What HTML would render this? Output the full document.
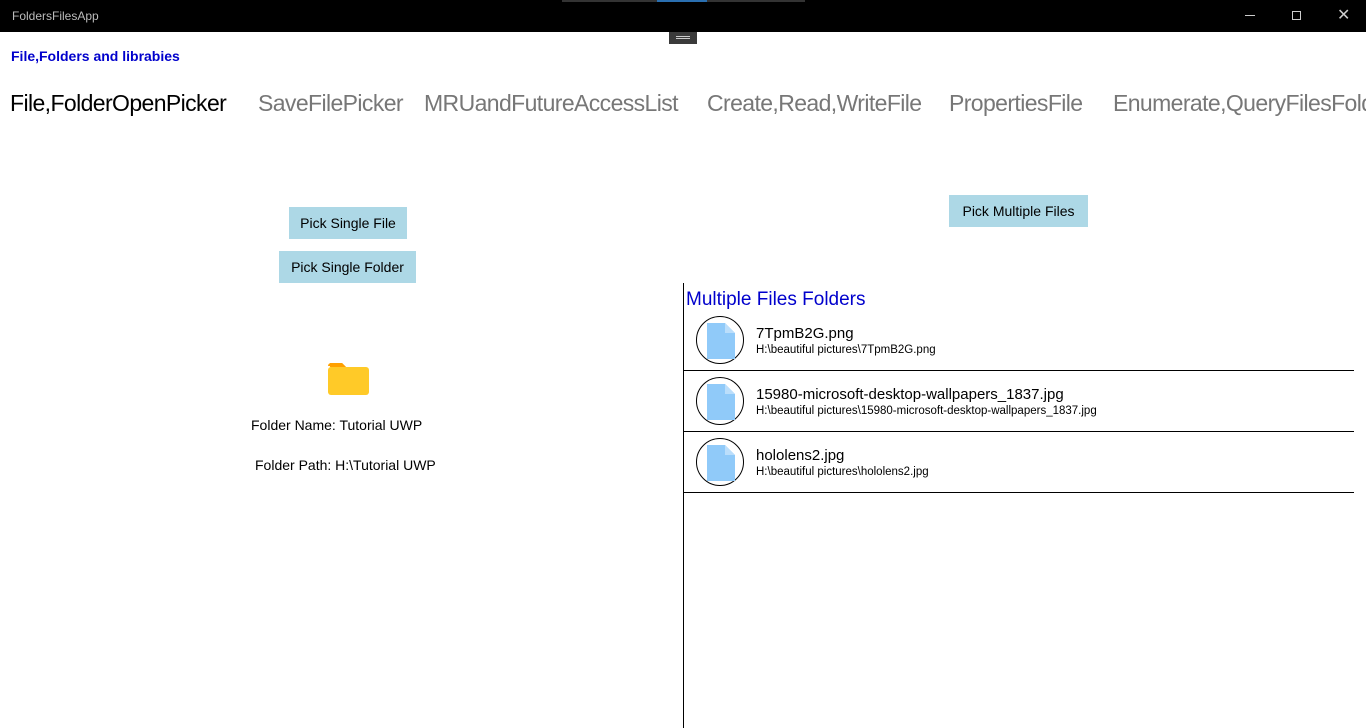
<!DOCTYPE html>
<html><head><meta charset="utf-8"><style>
*{margin:0;padding:0;box-sizing:border-box}
body{width:1366px;height:728px;position:relative;background:#fff;font-family:"Liberation Sans",sans-serif;overflow:hidden;color:#000}
.a{position:absolute;white-space:nowrap}
.tb{position:absolute;left:0;top:0;width:1366px;height:32px;background:#000}
.tab{position:absolute;top:90px;font-size:23px;color:#777;letter-spacing:-0.6px}
.btn{position:absolute;background:#ADD8E6;font-size:14px;display:flex;align-items:center;justify-content:center}
.row{position:absolute;left:684px;width:670px;height:61px;border-bottom:1px solid #000}
.circ{position:absolute;left:12px;top:6px;width:48px;height:48px;border:1px solid #000;border-radius:50%}
</style></head><body>
<div class="tb"></div>
<div class="a" style="left:562px;top:0;width:243px;height:2px;background:#333"></div>
<div class="a" style="left:657px;top:0;width:50px;height:2px;background:#2a6fb0"></div>
<div class="a" style="left:12px;top:9px;font-size:12px;color:#bbb">FoldersFilesApp</div>
<div class="a" style="left:1245px;top:15px;width:10px;height:1px;background:#ccc"></div>
<div class="a" style="left:1292px;top:11px;width:9px;height:9px;border:1px solid #ccc"></div>
<div class="a" style="left:1337px;top:9px;font-size:16px;color:#ccc;line-height:14px">✕</div>
<div class="a" style="left:669px;top:32px;width:28px;height:12px;background:#3a3a3a"><div style="margin:4px 7px 0;height:3px;border-top:1px solid #ccc;border-bottom:1px solid #ccc"></div></div>
<div class="a" style="left:11px;top:48px;font-size:14px;font-weight:bold;color:#0000cc">File,Folders and librabies</div>
<div class="tab" style="left:10px;color:#000">File,FolderOpenPicker</div>
<div class="tab" style="left:258px">SaveFilePicker</div>
<div class="tab" style="left:424px">MRUandFutureAccessList</div>
<div class="tab" style="left:707px">Create,Read,WriteFile</div>
<div class="tab" style="left:949px">PropertiesFile</div>
<div class="tab" style="left:1113px">Enumerate,QueryFilesFolders</div>
<div class="btn" style="left:289px;top:207px;width:118px;height:32px">Pick Single File</div>
<div class="btn" style="left:279px;top:251px;width:137px;height:32px">Pick Single Folder</div>
<div class="btn" style="left:949px;top:195px;width:139px;height:32px">Pick Multiple Files</div>
<svg class="a" style="left:327px;top:362px" width="43" height="34" viewBox="0 0 43 34"><path d="M3 1h12l4 4H3z" fill="#FFA000"/><rect x="1" y="5" width="41" height="28" rx="3" fill="#FFCA28"/><path d="M1 4a3 3 0 0 1 3-3h11l4 4" fill="#FFA000"/></svg>
<div class="a" style="left:251px;top:417px;font-size:14px">Folder Name: Tutorial UWP</div>
<div class="a" style="left:255px;top:457px;font-size:14px">Folder Path: H:\Tutorial UWP</div>
<div class="a" style="left:683px;top:283px;width:1px;height:445px;background:#000"></div>
<div class="a" style="left:686px;top:289px;font-size:19px;color:#0000cc">Multiple Files Folders</div>
<div class="row" style="top:310px">
<div class="circ"><svg style="position:absolute;left:10px;top:6px" width="28" height="36" viewBox="0 0 28 36"><path d="M0 0h18l10 10v26H0z" fill="#90CAF9"/><path d="M18 0v10h10z" fill="#BBDEFB"/></svg></div>
<div class="a" style="left:72px;top:15px;font-size:15px">7TpmB2G.png</div>
<div class="a" style="left:72px;top:34px;font-size:11.5px">H:\beautiful pictures\7TpmB2G.png</div></div>
<div class="row" style="top:371px">
<div class="circ"><svg style="position:absolute;left:10px;top:6px" width="28" height="36" viewBox="0 0 28 36"><path d="M0 0h18l10 10v26H0z" fill="#90CAF9"/><path d="M18 0v10h10z" fill="#BBDEFB"/></svg></div>
<div class="a" style="left:72px;top:15px;font-size:15px">15980-microsoft-desktop-wallpapers_1837.jpg</div>
<div class="a" style="left:72px;top:34px;font-size:11.5px">H:\beautiful pictures\15980-microsoft-desktop-wallpapers_1837.jpg</div></div>
<div class="row" style="top:432px">
<div class="circ"><svg style="position:absolute;left:10px;top:6px" width="28" height="36" viewBox="0 0 28 36"><path d="M0 0h18l10 10v26H0z" fill="#90CAF9"/><path d="M18 0v10h10z" fill="#BBDEFB"/></svg></div>
<div class="a" style="left:72px;top:15px;font-size:15px">hololens2.jpg</div>
<div class="a" style="left:72px;top:34px;font-size:11.5px">H:\beautiful pictures\hololens2.jpg</div></div>
</body></html>
